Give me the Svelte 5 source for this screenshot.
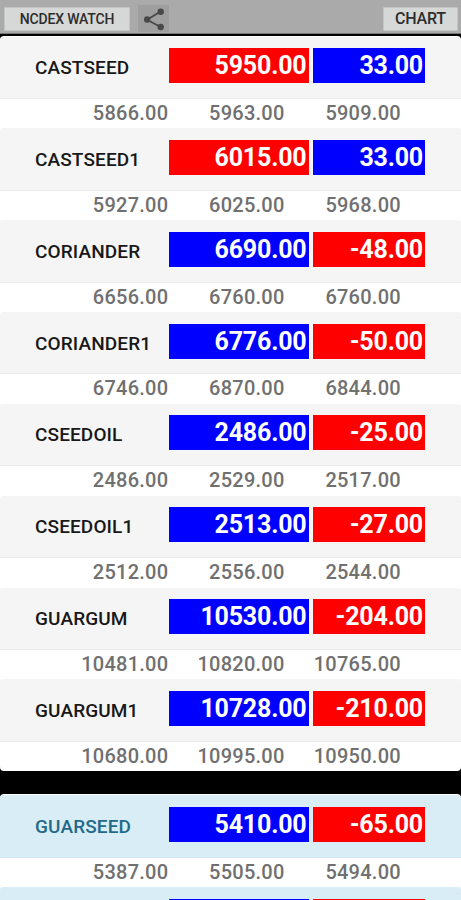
<script>
  // last price turns red when the tick is down, change when it is negative
  const rows = [
    { name: 'CASTSEED', last: '5950.00', change: '33.00', down: true, ohl: ['5866.00', '5963.00', '5909.00'] },
    { name: 'CASTSEED1', last: '6015.00', change: '33.00', down: true, ohl: ['5927.00', '6025.00', '5968.00'] },
    { name: 'CORIANDER', last: '6690.00', change: '-48.00', down: false, ohl: ['6656.00', '6760.00', '6760.00'] },
    { name: 'CORIANDER1', last: '6776.00', change: '-50.00', down: false, ohl: ['6746.00', '6870.00', '6844.00'] },
    { name: 'CSEEDOIL', last: '2486.00', change: '-25.00', down: false, ohl: ['2486.00', '2529.00', '2517.00'] },
    { name: 'CSEEDOIL1', last: '2513.00', change: '-27.00', down: false, ohl: ['2512.00', '2556.00', '2544.00'] },
    { name: 'GUARGUM', last: '10530.00', change: '-204.00', down: false, ohl: ['10481.00', '10820.00', '10765.00'] },
    { name: 'GUARGUM1', last: '10728.00', change: '-210.00', down: false, ohl: ['10680.00', '10995.00', '10950.00'] },
  ];

  const infoRows = [
    { name: 'GUARSEED', last: '5410.00', change: '-65.00', down: false, ohl: ['5387.00', '5505.00', '5494.00'] },
    { name: '', last: '', change: '', down: false, ohl: [] },
  ];

  const panels = [
    { type: 'default', rows: rows },
    { type: 'info', rows: infoRows },
  ];
</script>

<div class="screen">
  <header class="toolbar">
    <button class="watch">NCDEX WATCH</button>
    <button class="share" aria-label="Share">
      <svg width="22" height="24" viewBox="0 0 22 24">
        <path d="M17.7 4.5 L4 12.7 L17.7 20" fill="none" stroke="#484848" stroke-width="1.8" />
        <circle cx="17.7" cy="4.7" r="3.2" fill="#484848" />
        <circle cx="4.2" cy="12.5" r="3.2" fill="#484848" />
        <circle cx="17.7" cy="20" r="3.2" fill="#484848" />
      </svg>
    </button>
    <button class="chart">CHART</button>
  </header>

  {#each panels as panel (panel.type)}
    <section class="panel {panel.type}">
      {#each panel.rows as row (row.name)}
        <div class="item">
          <div class="heading">
            <span class="name">{row.name}</span>
            <span class="box last" class:red={row.down}>{row.last}</span>
            <span class="box change" class:red={!row.change || row.change.startsWith('-')}>{row.change}</span>
          </div>
          <div class="detail">
            {#each row.ohl as value}
              <span>{value}</span>
            {/each}
          </div>
        </div>
      {/each}
    </section>
  {/each}
</div>

<style>
:global(body) {
  background: #000;
  margin: 0;
}

.screen {
  width: 461px;
  height: 900px;
  overflow: hidden;
  background: #000;
  font-family: Roboto, sans-serif;
  font-weight: 500;
}

.toolbar {
  display: flex;
  box-sizing: border-box;
  height: 34px;
  padding: 7px 3px 0 4px;
  border-bottom: 1px solid #777;
  background: #aaa;
}

button {
  box-sizing: border-box;
  height: 24px;
  margin: 0;
  padding: 0;
  border: 1px solid #c4c6c5;
  border-radius: 1px;
  background: #d6d8d7;
  color: #2d2d2d;
  font-family: inherit;
  font-weight: 500;
  line-height: 22px;
}

.watch {
  width: 126px;
  font-size: 14px;
  letter-spacing: -0.15px;
}

.share {
  width: 31px;
  height: 27px;
  margin: -2px 0 0 8px;
  border: none;
  background: #9e9e9e;
}

.share svg {
  display: block;
  margin: 1px 0 0 5px;
}

.chart {
  width: 75px;
  margin-left: auto;
  font-size: 16px;
  letter-spacing: -0.2px;
}

.panel {
  box-sizing: border-box;
  margin-top: 1.5px;
  padding-top: 1.1px;
  border-radius: 4px;
  background: #fff;
  overflow: hidden;
}

.panel.info {
  margin-top: 23px;
  padding-top: 1.2px;
}

.item {
  height: 91.83px;
}

.heading {
  display: flex;
  box-sizing: border-box;
  height: 62.3px;
  padding: 11.5px 0 0 35px;
  border-bottom: 1px solid #ececec;
  border-radius: 3px 3px 0 0;
  background: #f5f5f5;
  color: #181818;
}

.info .heading {
  border-color: #cfe8f1;
  background: #d9edf7;
  color: #236a88;
}

.name {
  width: 134px;
  font-size: 19px;
  letter-spacing: 0.12px;
  line-height: 39px;
}

.box {
  box-sizing: border-box;
  height: 35px;
  padding-right: 2px;
  background: #00f;
  color: #fff;
  font-size: 25px;
  font-weight: 700;
  letter-spacing: -0.2px;
  line-height: 36px;
  text-align: right;
}

.last {
  width: 139.5px;
}

.change {
  width: 112px;
  margin-left: 4.5px;
}

.red {
  background: #f00;
}

.detail {
  display: flex;
  padding-left: 52px;
  color: #707070;
  font-size: 20px;
  letter-spacing: 0.25px;
  line-height: 29px;
}

.detail span {
  width: 116.3px;
  text-align: right;
}
</style>
